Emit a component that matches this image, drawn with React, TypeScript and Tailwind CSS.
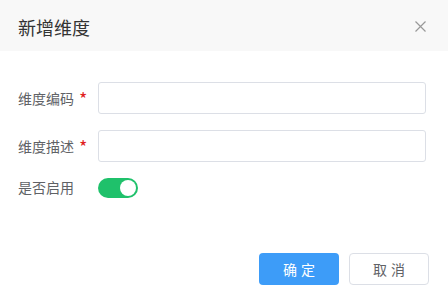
import React, { useState } from "react";

export default function App() {
  const [on, setOn] = useState(true);
  const font = { fontFamily: '"Noto Sans CJK SC", "Noto Sans", sans-serif' };
  return (
    <div className="w-[448px] h-[299px] bg-white flex flex-col" style={font}>
      <div className="h-[51px] bg-[#f8f8f8] flex items-center justify-between pl-[18px] pr-[22px]">
        <span className="text-[18px] text-[#333] leading-none mt-[2px]">新增维度</span>
        <svg width="11" height="11" viewBox="0 0 11 11" className="mt-[1px]">
          <path d="M0.5 0.5L10.5 10.5M10.5 0.5L0.5 10.5" stroke="#999" strokeWidth="1.2" />
        </svg>
      </div>
      <div className="flex flex-col pl-[18px] pr-[22px] pt-[31px] gap-[16px]">
        <div className="flex items-center">
          <div className="w-[80px] text-[14px] text-[#606266] flex items-center">
            维度编码<span className="text-[#e02020] ml-[5px] text-[18px] leading-none mt-[0px]">*</span>
          </div>
          <input className="w-[328px] h-[32px] border border-[#dcdfe6] rounded-[3px] outline-none px-2" />
        </div>
        <div className="flex items-center">
          <div className="w-[80px] text-[14px] text-[#606266] flex items-center">
            维度描述<span className="text-[#e02020] ml-[5px] text-[18px] leading-none mt-[0px]">*</span>
          </div>
          <input className="w-[328px] h-[32px] border border-[#dcdfe6] rounded-[3px] outline-none px-2" />
        </div>
        <div className="flex items-center -mt-[1px]">
          <div className="w-[80px] text-[14px] text-[#606266]">是否启用</div>
          <button
            onClick={() => setOn(!on)}
            className={`w-[40px] h-[20px] rounded-full flex items-center px-[2px] ${on ? "bg-[#1fc16b] justify-end" : "bg-[#ccc] justify-start"}`}
          >
            <span className="w-[16px] h-[16px] rounded-full bg-white block" />
          </button>
        </div>
      </div>
      <div className="flex justify-end gap-[10px] pr-[19px] mt-[55px]">
        <button className="w-[80px] h-[32px] rounded-[4px] bg-[#3d9cf8] text-white text-[14px] tracking-[4px] pl-[4px]">确定</button>
        <button className="w-[80px] h-[32px] rounded-[4px] border border-[#dcdfe6] bg-white text-[#606266] text-[14px] tracking-[4px] pl-[4px]">取消</button>
      </div>
    </div>
  );
}
